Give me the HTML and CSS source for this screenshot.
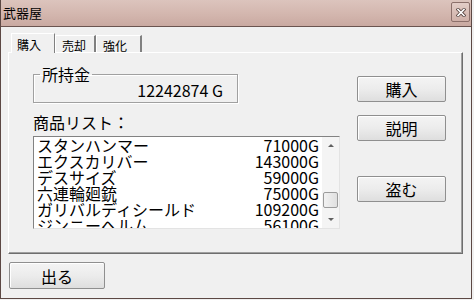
FILE: index.html
```html
<!DOCTYPE html>
<html lang="ja">
<head>
    <meta charset="UTF-8">
    <title>武器屋</title>
    <link rel="stylesheet" href="styles.css">
</head>
<body>
    <div class="window">
        <div class="titlebar">
            <span class="title">武器屋</span>
            <div class="close">
                <svg width="10" height="9" viewBox="0 0 10 9">
                    <path d="M2 1.5 L8 7.5 M8 1.5 L2 7.5" stroke="#5a4642" stroke-width="3.2" stroke-linecap="square"/>
                    <path d="M2 1.5 L8 7.5 M8 1.5 L2 7.5" stroke="#fff" stroke-width="1.6" stroke-linecap="square"/>
                </svg>
            </div>
        </div>
        <div class="client">
            <div class="tabs">
                <div class="tab active">購入</div>
                <div class="tab t2">売却</div>
                <div class="tab t3">強化</div>
            </div>
            <div class="panel">
                <div class="left">
                    <fieldset class="money">
                        <legend>所持金</legend>
                        <div class="amount">12242874 G</div>
                    </fieldset>
                    <div class="label">商品リスト：</div>
                    <div class="list">
                        <div class="items">
                            <div class="row"><span>スタンハンマー</span><span>71000G</span></div>
                            <div class="row"><span>エクスカリバー</span><span>143000G</span></div>
                            <div class="row"><span>デスサイズ</span><span>59000G</span></div>
                            <div class="row"><span>六連輪廻銃</span><span>75000G</span></div>
                            <div class="row"><span>ガリバルディシールド</span><span>109200G</span></div>
                            <div class="row"><span>ジンニーヘルム</span><span>56100G</span></div>
                        </div>
                        <div class="scroll">
                            <div class="arrow up"></div>
                            <div class="thumb"></div>
                            <div class="arrow down"></div>
                        </div>
                    </div>
                </div>
                <div class="side">
                    <button class="btn">購入</button>
                    <button class="btn gap1">説明</button>
                    <button class="btn gap2">盗む</button>
                </div>
            </div>
            <button class="btn exit">出る</button>
        </div>
    </div>
</body>
</html>
```

FILE: styles.css
```css
body {
    margin: 0;
    font-family: "Noto Sans CJK JP", sans-serif;
    background: #f0f0f0;
}
.window {
    width: 472px;
    height: 299px;
    box-sizing: border-box;
    border: 1px solid #5c4844;
    border-top: none;
    background: #f0f0f0;
}
.titlebar {
    height: 26px;
    display: flex;
    align-items: center;
    justify-content: space-between;
    padding: 0 1px 0 2px;
    background: linear-gradient(180deg, #dcc4bd 0%, #d3b6ae 55%, #c9a9a1 100%);
    border-bottom: 1px solid #6a5450;
}
.title {
    font-size: 13px;
    line-height: 14px;
    color: #000;
}
.close {
    width: 17px;
    height: 18px;
    margin-top: -2px;
    border: 1px solid #8c706b;
    border-radius: 2px;
    background: linear-gradient(180deg, #e3cdc7, #cfb0a8);
    display: flex;
    align-items: center;
    justify-content: center;
}
.client {
    padding: 6px 0 0 7px;
}
.tabs {
    display: flex;
    height: 19px;
    padding-left: 3px;
    position: relative;
    z-index: 1;
}
.tab {
    font-size: 12px;
    line-height: 14px;
    padding: 3px 0 0 6px;
    margin-top: 2px;
    height: 17px;
    box-sizing: border-box;
    border-left: 1px solid #fff;
    border-top: 1px solid #fff;
    border-right: 2px solid #808080;
    background: #f0f0f0;
}
.tab.active {
    width: 44px;
    margin-top: 0;
    height: 20px;
    padding: 4px 0 0 5px;
    border-right: 1px solid #808080;
}
.t2 {
    width: 41px;
}
.t3 {
    width: 46px;
}
.panel {
    width: 455px;
    height: 202px;
    box-sizing: border-box;
    border: 1px solid;
    border-color: #fff #6e6e6e #6e6e6e #fff;
    box-shadow: inset -1px -1px 0 #a0a0a0;
    display: flex;
    padding: 13px 0 0 24px;
}
.left {
    width: 307px;
}
.money {
    width: 205px;
    box-sizing: border-box;
    margin: 0;
    padding: 0 14px 4px 6px;
    border: 1px solid #a0a0a0;
    box-shadow: 1px 1px 0 #fff, inset 1px 1px 0 #fff;
    min-width: 0;
}
.money legend {
    font-size: 16px;
    line-height: 16px;
    padding: 0 2px;
}
.amount {
    text-align: right;
    font-size: 16px;
    line-height: 16px;
}
.label {
    margin-top: 11px;
    font-size: 16px;
    line-height: 16px;
}
.list {
    margin-top: 6px;
    height: 93px;
    box-sizing: border-box;
    border: 1px solid;
    border-color: #828282 #e3e3e3 #e3e3e3 #828282;
    background: #fff;
    display: flex;
}
.items {
    flex: 1;
    overflow: hidden;
}
.row {
    display: flex;
    justify-content: space-between;
    font-size: 16px;
    line-height: 16px;
    height: 16px;
    padding: 0 3px 0 3px;
    white-space: nowrap;
}
.scroll {
    width: 17px;
    background: #f4f4f4;
    position: relative;
}
.arrow {
    position: absolute;
    left: 6px;
    width: 0;
    height: 0;
    border-left: 3px solid transparent;
    border-right: 3px solid transparent;
}
.arrow.up {
    top: 7px;
    border-bottom: 3px solid #606060;
}
.arrow.down {
    bottom: 7px;
    border-top: 3px solid #606060;
}
.thumb {
    position: absolute;
    left: 1px;
    top: 55px;
    width: 15px;
    height: 16px;
    box-sizing: border-box;
    border: 1px solid #9c9c9c;
    border-radius: 2px;
    background: linear-gradient(90deg, #f2f2f2, #e0e0e0);
}
.side {
    display: flex;
    flex-direction: column;
    padding: 10px 0 0 17px;
}
.btn {
    font-family: "Noto Sans CJK JP", sans-serif;
    font-size: 16px;
    line-height: 16px;
    width: 89px;
    height: 26px;
    padding: 0;
    border: 1px solid #8f8f8f;
    border-radius: 2px;
    background: linear-gradient(180deg, #f4f4f4 0%, #ececec 50%, #dedede 100%);
    box-shadow: inset 1px 1px 0 #fff;
    color: #000;
}
.gap1 {
    margin-top: 13px;
}
.gap2 {
    margin-top: 35px;
}
.exit {
    width: 96px;
    height: 27px;
    margin: 8px 0 0 1px;
}
```
